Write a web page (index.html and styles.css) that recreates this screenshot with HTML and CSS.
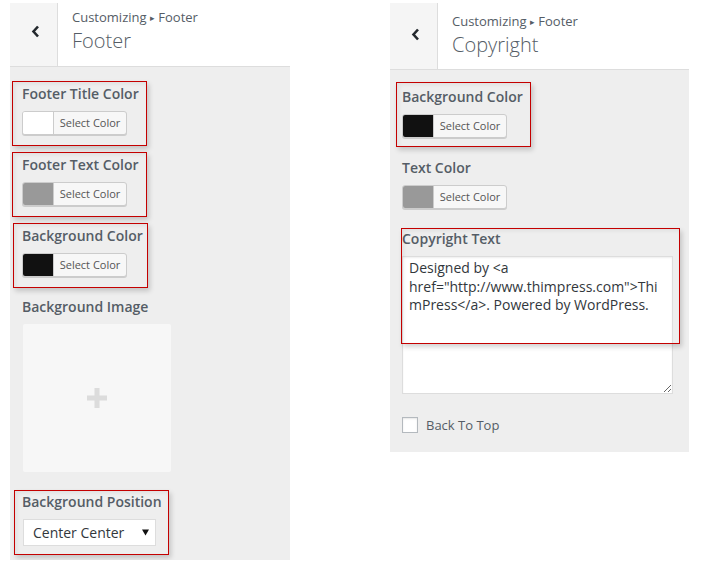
FILE: index.html
```html
<!DOCTYPE html>
<html lang="en">
<head>
<meta charset="utf-8">
<title>Customizing Footer</title>
<link rel="stylesheet" href="styles.css">
</head>
<body>
<div class="page">
  <section class="panel panel-footer">
    <header class="panel-head">
      <button type="button" class="back" aria-label="Back">
        <svg width="9" height="13" viewBox="0 0 9 13"><polyline points="7,1.5 2.5,6.5 7,11.5" fill="none" stroke="#23282d" stroke-width="2.6"/></svg>
      </button>
      <div class="head-text">
        <div class="crumb">Customizing <span class="crumb-arrow">▸</span> Footer</div>
        <h1 class="title">Footer</h1>
      </div>
    </header>
    <div class="panel-body">
      <div class="control mark mark--a">
        <span class="control-title">Footer Title Color</span>
        <button type="button" class="color-btn"><span class="swatch swatch--white"></span><span class="color-label">Select Color</span></button>
      </div>
      <div class="control mark mark--a">
        <span class="control-title">Footer Text Color</span>
        <button type="button" class="color-btn"><span class="swatch swatch--gray"></span><span class="color-label">Select Color</span></button>
      </div>
      <div class="control mark mark--b">
        <span class="control-title">Background Color</span>
        <button type="button" class="color-btn"><span class="swatch swatch--black"></span><span class="color-label">Select Color</span></button>
      </div>
      <div class="control">
        <span class="control-title">Background Image</span>
        <div class="img-slot">
          <svg width="20" height="20" viewBox="0 0 20 20"><rect x="7.5" y="0" width="5" height="20" fill="#dcdcdc"/><rect x="0" y="7.5" width="20" height="5" fill="#dcdcdc"/></svg>
        </div>
      </div>
      <div class="control mark mark--c">
        <span class="control-title">Background Position</span>
        <div class="select"><span>Center Center</span><svg width="7" height="7" viewBox="0 0 7 7"><polygon points="0,0.5 7,0.5 3.5,6.5" fill="#111"/></svg></div>
      </div>
    </div>
  </section>

  <section class="panel panel-copyright">
    <header class="panel-head panel-head--tall">
      <button type="button" class="back" aria-label="Back">
        <svg width="9" height="13" viewBox="0 0 9 13"><polyline points="7,1.5 2.5,6.5 7,11.5" fill="none" stroke="#23282d" stroke-width="2.6"/></svg>
      </button>
      <div class="head-text">
        <div class="crumb">Customizing <span class="crumb-arrow">▸</span> Footer</div>
        <h1 class="title">Copyright</h1>
      </div>
    </header>
    <div class="panel-body panel-body--short">
      <div class="control mark mark--d">
        <span class="control-title">Background Color</span>
        <button type="button" class="color-btn"><span class="swatch swatch--black"></span><span class="color-label">Select Color</span></button>
      </div>
      <div class="control">
        <span class="control-title">Text Color</span>
        <button type="button" class="color-btn"><span class="swatch swatch--gray"></span><span class="color-label">Select Color</span></button>
      </div>
      <div class="control mark mark--e">
        <span class="control-title">Copyright Text</span>
        <textarea class="textarea">Designed by &lt;a href="http://www.thimpress.com"&gt;ThimPress&lt;/a&gt;. Powered by WordPress.</textarea>
      </div>
      <div class="control control-check">
        <label class="check-row"><input type="checkbox" class="checkbox"><span>Back To Top</span></label>
      </div>
    </div>
  </section>
</div>
</body>
</html>
```

FILE: styles.css
```css
* { box-sizing: border-box; }

html, body {
  margin: 0;
  background: #fff;
}

body {
  font-family: "Open Sans", "Noto Sans", sans-serif;
  color: #555d66;
}

.page {
  display: flex;
  align-items: flex-start;
  gap: 100px;
  padding: 3px 0 0 10px;
}

.panel {
  background: #eeeeee;
}

.panel-footer { width: 280px; }
.panel-copyright { width: 299px; }

/* header */
.panel-head {
  display: flex;
  height: 64px;
  background: #fff;
  border-bottom: 1px solid #dddddd;
}

.panel-head--tall { height: 67px; }

.back {
  flex: none;
  width: 48px;
  margin: 0;
  border: 0;
  border-right: 1px solid #dddddd;
  background: #f5f5f5;
  padding: 22px 0 0 3px;
  display: flex;
  justify-content: center;
  align-items: flex-start;
}

.panel-head--tall .back { padding-top: 25px; }

.head-text {
  padding: 5px 0 0 14px;
}

.panel-head--tall .head-text { padding-top: 9px; }

.crumb {
  font-size: 13px;
  line-height: 18px;
  color: #555d66;
}

.crumb-arrow {
  font-size: 9px;
  vertical-align: 1px;
  color: #555d66;
}

.title {
  margin: 0;
  font-size: 20px;
  line-height: 28px;
  font-weight: 300;
  color: #555d66;
}

/* body */
.panel-body {
  padding: 16px 16px 14px 12px;
}

.panel-body--short { padding-bottom: 17px; }

.control {
  position: relative;
  margin-bottom: 19px;
}

.control:last-child { margin-bottom: 0; }

.control-title {
  display: block;
  font-size: 14px;
  line-height: 20px;
  padding-top: 1px;
  font-weight: 600;
  margin-bottom: 7px;
  color: #555d66;
}

/* red annotation callouts laid over controls */
.mark::before {
  content: "";
  position: absolute;
  border: 1px solid #c40000;
  box-shadow: 2px 3px 5px rgba(0, 0, 0, 0.18), inset 2px 2px 4px rgba(0, 0, 0, 0.06);
  pointer-events: none;
  z-index: 1;
}

.mark--a::before { top: -2px; left: -10px; width: 133px; height: 63px; }
.mark--b::before { top: -2px; left: -9px; width: 133px; height: 63px; }
.mark--c::before { top: -1px; left: -8px; width: 153px; height: 63px; }
.mark--d::before { top: -4px; left: -6px; width: 133px; height: 63px; }
.mark--e::before { top: 0; left: -1px; width: 277px; height: 114px; }

/* color picker button */
.color-btn {
  display: flex;
  width: 105px;
  height: 24px;
  padding: 0;
  margin: 0;
  border: 1px solid #cccccc;
  border-radius: 3px;
  background: #f7f7f7;
  box-shadow: 0 1px 0 #cccccc;
  overflow: hidden;
  font-family: inherit;
}

.swatch {
  flex: none;
  width: 31px;
  height: 100%;
  border-right: 1px solid #cccccc;
}

.swatch--white { background: #ffffff; }
.swatch--gray { background: #999999; }
.swatch--black { background: #111111; }

.color-label {
  flex: 1;
  font-size: 11px;
  line-height: 22px;
  color: #555555;
  text-align: center;
}

/* image placeholder */
.img-slot {
  width: 148px;
  height: 148px;
  margin-left: 1px;
  background: #f7f7f7;
  border-radius: 2px;
  display: flex;
  align-items: center;
  justify-content: center;
}

/* select */
.select {
  width: 133px;
  height: 27px;
  margin-left: 1px;
  border: 1px solid #dddddd;
  background: #fff;
  display: flex;
  align-items: center;
  justify-content: space-between;
  padding: 0 6px 0 9px;
  font-size: 14px;
  color: #32373c;
}

/* textarea */
.textarea {
  display: block;
  width: 271px;
  height: 138px;
  margin: 0;
  border: 1px solid #dddddd;
  padding: 2px 6px;
  font-family: "Open Sans", "Noto Sans", sans-serif;
  font-size: 14px;
  line-height: 18.5px;
  color: #32373c;
  background: #fff;
  resize: vertical;
  box-shadow: inset 0 1px 2px rgba(0, 0, 0, 0.07);
}

/* checkbox */
.control-check { padding-top: 2px; }

.check-row {
  display: flex;
  align-items: center;
  gap: 8px;
  height: 20px;
  font-size: 13px;
  color: #555d66;
}

.checkbox {
  appearance: none;
  -webkit-appearance: none;
  flex: none;
  width: 16px;
  height: 16px;
  margin: 0;
  border: 1px solid #b4b9be;
  background: #fff;
  box-shadow: inset 0 1px 2px rgba(0, 0, 0, 0.1);
}
```
